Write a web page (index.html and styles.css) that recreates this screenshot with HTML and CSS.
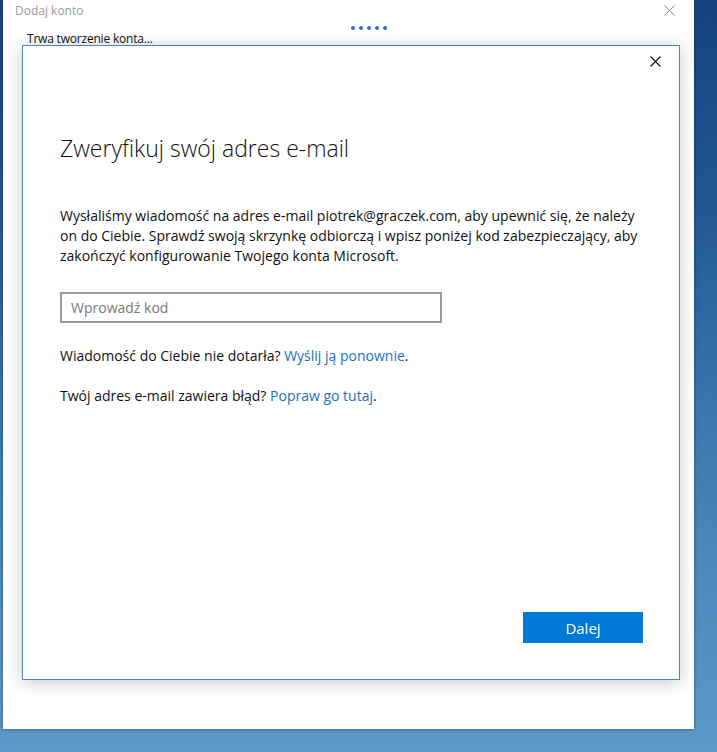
FILE: index.html
```html
<!DOCTYPE html>
<html lang="pl">
<head>
<meta charset="utf-8">
<link rel="stylesheet" href="styles.css">
</head>
<body>
<div class="window">
  <div class="header">
    <div class="titlebar">
      <span class="title">Dodaj konto</span>
      <svg class="close close-outer" width="11" height="11" viewBox="0 0 11 11"><path d="M0.5 0.5 L10.5 10.5 M10.5 0.5 L0.5 10.5" stroke="#8a8a8a" stroke-width="1" fill="none"/></svg>
    </div>
    <div class="dots"><i></i><i></i><i></i><i></i><i></i></div>
    <div class="status">Trwa tworzenie konta...</div>
  </div>
  <div class="dialog">
    <div class="dialog-top">
      <svg class="close" width="11" height="11" viewBox="0 0 11 11"><path d="M0.5 0.5 L10.5 10.5 M10.5 0.5 L0.5 10.5" stroke="#111" stroke-width="1.1" fill="none"/></svg>
    </div>
    <div class="content">
      <h1 class="heading">Zweryfikuj swój adres e-mail</h1>
      <p class="lead">Wysłaliśmy wiadomość na adres e-mail piotrek@graczek.com, aby upewnić się, że należy<br>on do Ciebie. Sprawdź swoją skrzynkę odbiorczą i wpisz poniżej kod zabezpieczający, aby<br>zakończyć konfigurowanie Twojego konta Microsoft.</p>
      <div class="field"><input class="code" type="text" placeholder="Wprowadź kod"></div>
      <p class="line">Wiadomość do Ciebie nie dotarła? <a class="link" href="#">Wyślij ją ponownie</a>.</p>
      <p class="line">Twój adres e-mail zawiera błąd? <a class="link" href="#">Popraw go tutaj</a>.</p>
    </div>
    <div class="actions"><button class="btn">Dalej</button></div>
  </div>
</div>
</body>
</html>
```
FILE: styles.css
```css
html, body {
  margin: 0;
  padding: 0;
  height: 100%;
}
body {
  width: 717px;
  height: 752px;
  overflow: hidden;
  background: linear-gradient(180deg, #17437f 0%, #1f5592 25%, #3a77ae 55%, #4f8cbf 80%, #5d98c6 100%);
  font-family: "Open Sans", "Noto Sans", "DejaVu Sans", sans-serif;
}
.window {
  margin-left: 3px;
  width: 691px;
  height: 729px;
  background: #fff;
  box-shadow: 0 0 3px rgba(0,0,0,0.45);
  display: flex;
  flex-direction: column;
}
.header {
  height: 45px;
  display: grid;
  grid-template-rows: 20px 12px 13px;
}
.titlebar {
  display: flex;
  justify-content: space-between;
  align-items: center;
  padding: 0 19px 0 12px;
}
.title {
  font-size: 12px;
  color: #9a9a9a;
}
.close { display: block; }
.dots {
  display: flex;
  gap: 4px;
  padding-left: 348px;
  padding-top: 6px;
}
.dots i {
  width: 4px;
  height: 4px;
  border-radius: 50%;
  background: #1d6fc8;
}
.status {
  padding-left: 24px;
  font-size: 12px;
  line-height: 13px;
  color: #111;
  letter-spacing: -0.2px;
}
.dialog {
  margin-left: 19px;
  width: 656px;
  height: 633px;
  border: 1px solid #4a84bb;
  background: #fff;
  box-shadow: 0 2px 16px rgba(0,0,0,0.22);
  display: flex;
  flex-direction: column;
}
.dialog-top {
  display: flex;
  justify-content: flex-end;
  padding: 10px 18px 0 0;
}
.content {
  padding-left: 37px;
  flex: 1;
}
.heading {
  margin: 66px 0 0 0;
  font-size: 23px;
  font-weight: 300;
  line-height: 30px;
  color: #111;
}
.lead {
  margin: 43px 0 0 0;
  font-size: 14px;
  line-height: 20px;
  color: #111;
}
.field { margin-top: 26px; }
.code {
  box-sizing: border-box;
  width: 382px;
  height: 31px;
  border: 2px solid #9a9a9a;
  padding: 0 9px;
  font-family: inherit;
  font-size: 14px;
  outline: none;
}
.code::placeholder { color: #777; }
.line {
  margin: 23px 0 0 0;
  font-size: 14px;
  line-height: 20px;
  color: #111;
}
.line + .line { margin-top: 20px; }
.link {
  color: #1a6fc0;
  text-decoration: none;
}
.actions {
  display: flex;
  justify-content: flex-end;
  padding: 0 36px 36px 0;
}
.btn {
  width: 120px;
  height: 31px;
  border: none;
  background: #0078d7;
  color: #fff;
  font-family: inherit;
  font-size: 15px;
}
```
